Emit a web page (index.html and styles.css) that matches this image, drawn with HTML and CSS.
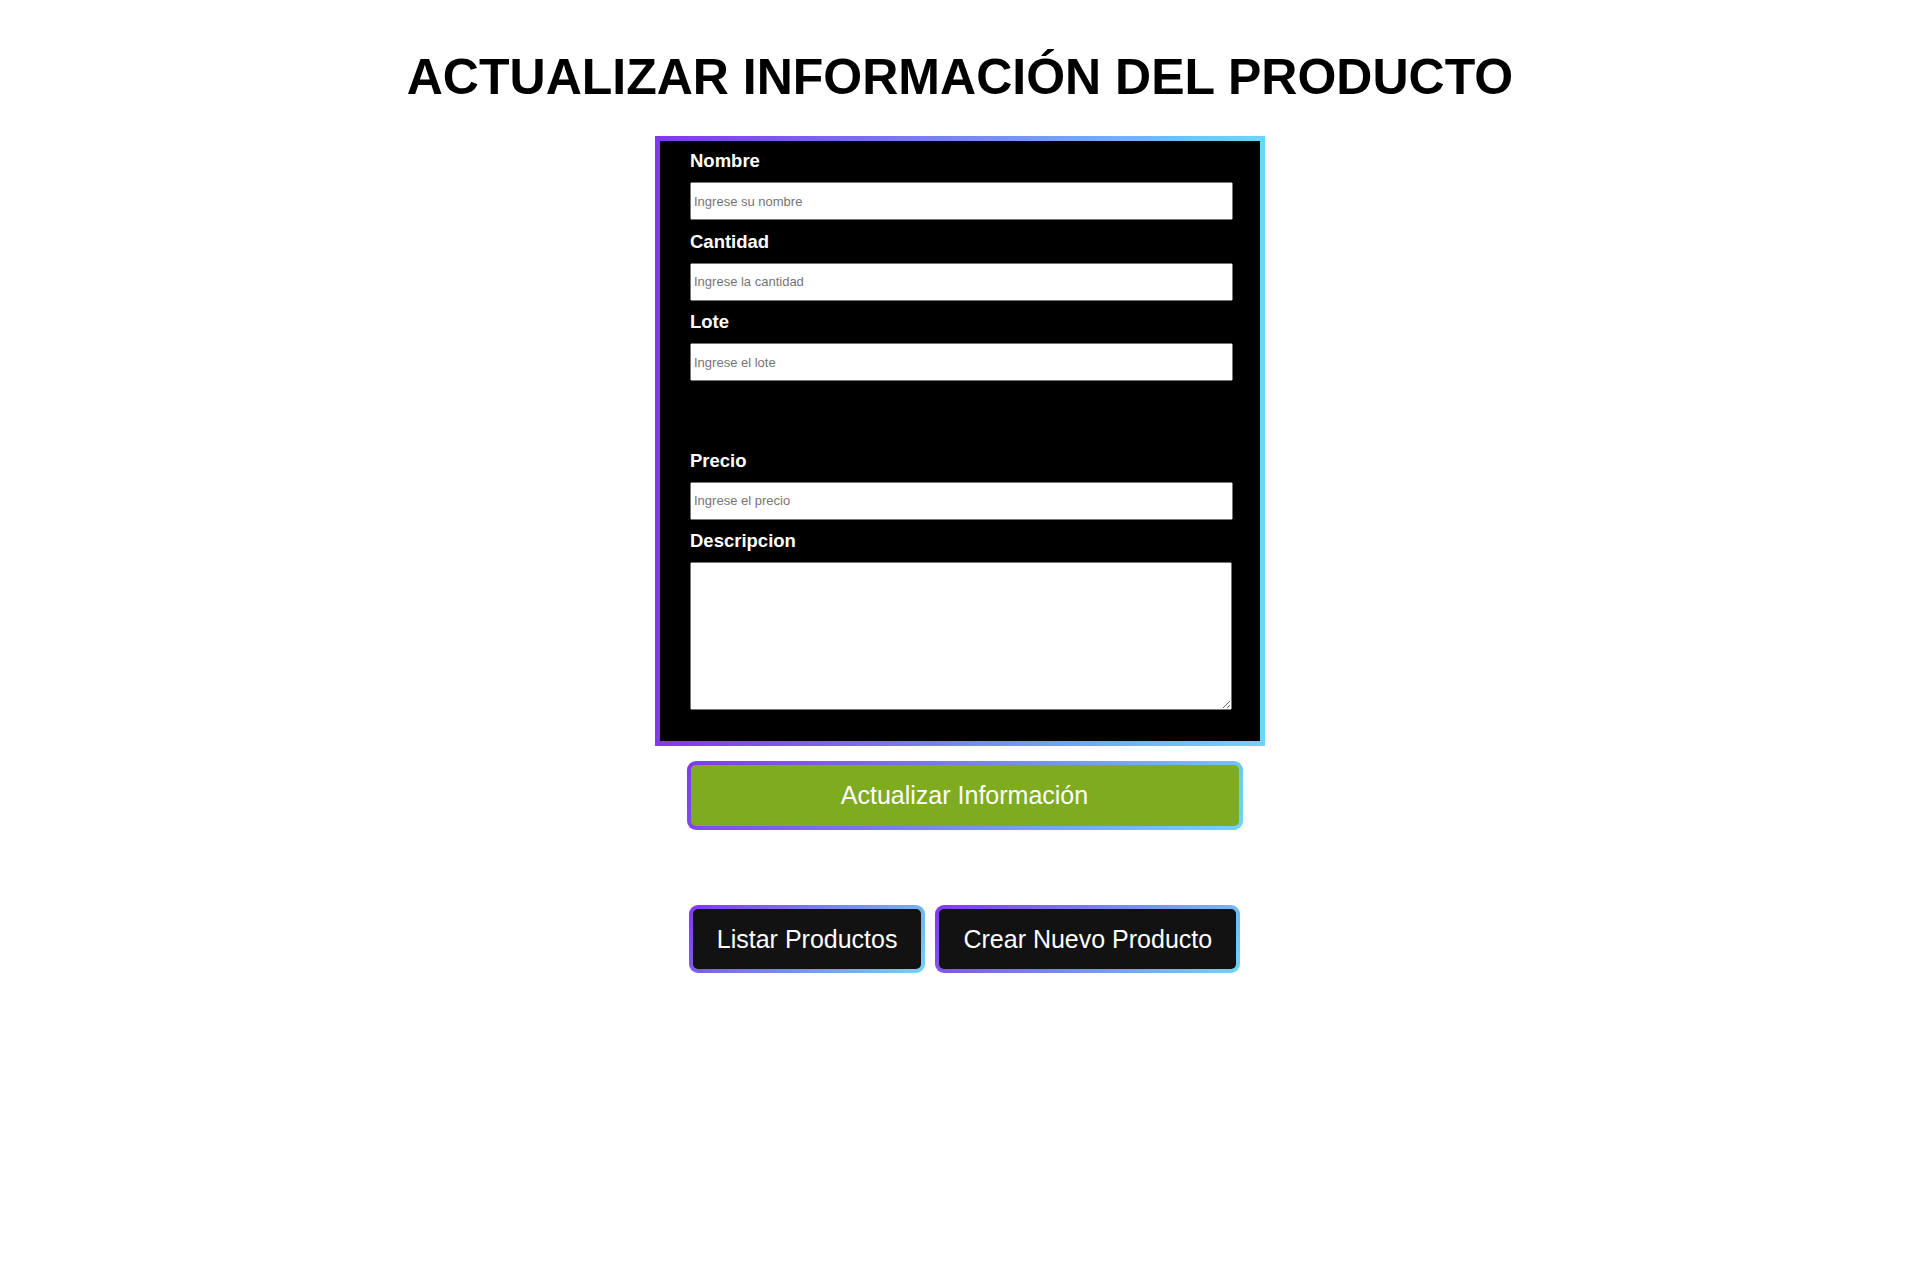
FILE: index.html
```html
<!DOCTYPE html>
<html lang="es">
<head>
    <meta charset="UTF-8">
    <meta name="viewport" content="width=device-width, initial-scale=1.0">
    <title>Actualizar Producto</title>
    <link rel="stylesheet" href="styles.css">
</head>
<body>
    <h1 class="titulo">ACTUALIZAR INFORMACIÓN DEL PRODUCTO</h1>

    <form class="formulario" id="formProducto">
        <label for="nombre">Nombre</label>
        <input type="text" id="nombre" placeholder="Ingrese su nombre">

        <label for="cantidad">Cantidad</label>
        <input type="number" id="cantidad" placeholder="Ingrese la cantidad">

        <label for="lote">Lote</label>
        <input type="text" id="lote" placeholder="Ingrese el lote">

        <div class="espacio"></div>

        <label for="precio">Precio</label>
        <input type="text" id="precio" placeholder="Ingrese el precio">

        <label for="descripcion">Descripcion</label>
        <textarea id="descripcion"></textarea>
    </form>

    <div class="acciones">
        <button type="submit" form="formProducto" class="btn-actualizar">Actualizar Información</button>
    </div>

    <div class="acciones navegacion">
        <button class="btn-nav">Listar Productos</button>
        <button class="btn-nav">Crear Nuevo Producto</button>
    </div>
</body>
</html>
```

FILE: styles.css
```css
body {
    margin: 0;
    font-family: Arial, "Liberation Sans", sans-serif;
    background-color: #ffffff;
}
.titulo {
    text-align: center;
    font-size: 50px;
    margin: 48px 0 30px;
    color: #000000;
}
.formulario {
    width: 543px;
    margin: 0 auto;
    padding: 9px 27px 31px 30px;
    background-color: #000000;
    border: 5px solid;
    border-image: linear-gradient(to right, #8338ec, #6dd5fa) 1;
    display: flex;
    flex-direction: column;
}
.formulario label {
    color: #ffffff;
    font-weight: bold;
    font-size: 18.5px;
    line-height: 21px;
    margin-bottom: 11px;
}
.formulario input {
    box-sizing: border-box;
    width: 100%;
    height: 38px;
    margin: 0 0 10.5px;
    font-family: Arial, "Liberation Sans", sans-serif;
    font-size: 13px;
}
.formulario input::placeholder {
    color: #757575;
}
.formulario input[type="number"]::-webkit-inner-spin-button {
    display: none;
}
.espacio {
    height: 58px;
}
.formulario textarea {
    box-sizing: border-box;
    width: 542px;
    height: 148px;
    margin: 0;
}
.acciones {
    display: flex;
    justify-content: center;
    padding-left: 9px;
    margin-top: 15px;
}
.navegacion {
    margin-top: 75px;
    gap: 10px;
}
.btn-actualizar,
.btn-nav {
    font-family: Arial, "Liberation Sans", sans-serif;
    font-size: 25px;
    color: #ffffff;
    border: 4px solid transparent;
    border-radius: 9px;
    cursor: pointer;
}
.btn-actualizar {
    width: 556px;
    height: 69px;
    background: linear-gradient(#7fab21, #7fab21) padding-box,
                linear-gradient(135deg, #8338ec, #6dd5fa) border-box;
}
.btn-nav {
    padding: 16px 24px;
    line-height: 28px;
    background: linear-gradient(#121212, #121212) padding-box,
                linear-gradient(135deg, #8338ec, #6dd5fa) border-box;
}
```
